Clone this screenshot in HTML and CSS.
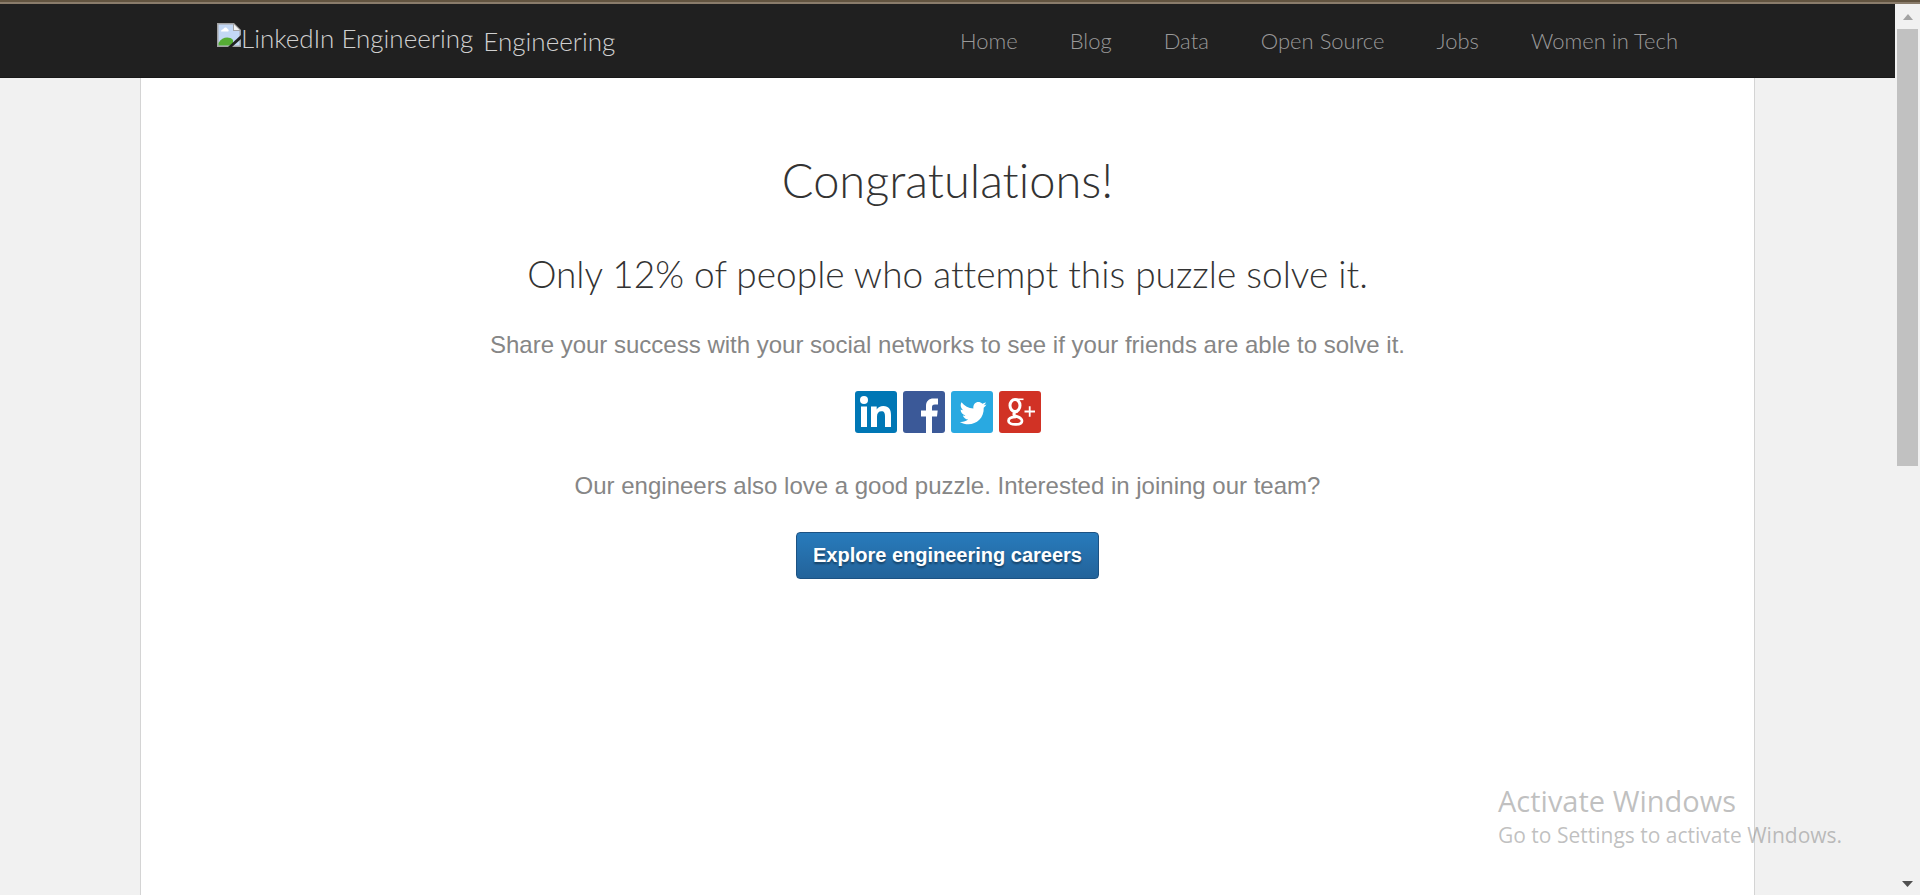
FILE: index.html
```
<!DOCTYPE html>
<html lang="en">
<head>
<meta charset="utf-8">
<title>LinkedIn Engineering</title>
<link rel="stylesheet" href="styles.css">
</head>
<body>
<div class="window-edge"></div>
<div class="viewport">
  <div class="page">
    <header class="header">
      <a class="brand" href="#">
        <span class="logo">
          <svg class="logo-icon" viewBox="0 0 24 24" aria-hidden="true">
            <path d="M0 0H17L24 7V24H0Z" fill="#a3a3a3"/>
            <path d="M1.500 1.500H16V8H22.500V22.500H1.500Z" fill="#c3d8f5"/>
            <path d="M4 8.500C4 6.500 6 6.500 6.500 6C7 4 10 4 10.500 6C12 6.500 12 8.500 11 8.500Z" fill="#fff"/>
            <path d="M1.500 22.500V20C5 14 12 13 16 17V22.500Z" fill="#56ad35"/>
            <path d="M17 1.500V7H22.500Z" fill="#f4f4f4"/>
            <path d="M11 24L24 12V16L15 24Z" fill="#202020"/>
          </svg>
          <span>LinkedIn Engineering</span>
        </span>
        <span class="brand-name">Engineering</span>
      </a>
      <nav class="nav">
        <a href="#">Home</a>
        <a href="#">Blog</a>
        <a href="#">Data</a>
        <a href="#">Open Source</a>
        <a href="#">Jobs</a>
        <a href="#">Women in Tech</a>
      </nav>
    </header>
    <main class="content">
      <h1>Congratulations!</h1>
      <h2>Only 12% of people who attempt this puzzle solve it.</h2>
      <p>Share your success with your social networks to see if your friends are able to solve it.</p>
      <div class="share">
        <a href="#" aria-label="Share on LinkedIn"><svg viewBox="0 0 42 42">
          <rect width="42" height="42" rx="3" fill="#0077b5"/>
          <circle cx="9" cy="9" r="4" fill="#fff"/>
          <path d="M6 15.500H12V36H6ZM16 15.500H21.700V18.500C23 16.200 25.300 15 28.300 15C34 15 36 18.500 36 24V36H30V25.500C30 22.300 29.300 20.300 26.500 20.300C23.500 20.300 22 22.300 22 25.500V36H16Z" fill="#fff"/>
        </svg></a>
        <a href="#" aria-label="Share on Facebook"><svg viewBox="0 0 42 42">
          <rect width="42" height="42" rx="3" fill="#3b5998"/>
          <path d="M23 42V25.500H18V19.500H23V15C23 10 26 7.500 30.500 7.500H35V13.500H32C29.500 13.500 29 14.500 29 16.500V19.500H34.700L34 25.500H29V42Z" fill="#fff"/>
        </svg></a>
        <a href="#" aria-label="Share on Twitter"><svg viewBox="0 0 42 42">
          <rect width="42" height="42" rx="3" fill="#29a9e1"/>
          <path d="M35.500 13.500C34.500 14 33.600 14.200 32.700 14.300C33.800 13.600 34.500 12.600 34.900 11.300C33.800 12 32.600 12.400 31.400 12.700C27.500 8.700 21.500 11.800 22.400 17.500C17.500 17.300 13.500 15 10.500 11.300C9 14 9.700 17.500 12.300 19.200C11.400 19.200 10.500 19 9.600 18.500C9.600 21.300 11.500 23.700 14.400 24.400C13.600 24.700 12.700 24.700 11.800 24.500C12.600 26.900 14.600 28.400 17.200 28.500C14.800 30.400 11.900 31.200 8.800 30.900C19.500 37.300 33.400 30.300 32.700 16.800C33.800 16 34.800 14.900 35.500 13.500Z" fill="#fff"/>
        </svg></a>
        <a href="#" aria-label="Share on Google Plus"><svg viewBox="0 0 42 42">
          <rect width="42" height="42" rx="3" fill="#d13225"/>
          <g fill="none" stroke="#fff">
            <ellipse cx="16" cy="14.500" rx="5" ry="6" stroke-width="3"/>
            <path d="M16.500 8.300H24.500" stroke-width="1.600"/>
            <path d="M18.500 20.300C15 21.500 14 23 15.500 24.300C17.500 26 23 26 23 30C23 34.500 9.500 34.700 9.500 30C9.500 27 13 25.800 17 25.800" stroke-width="2.700"/>
            <path d="M25.500 20.500H36M30.700 15.300V25.700" stroke-width="1.800"/>
          </g>
        </svg></a>
      </div>
      <p>Our engineers also love a good puzzle. Interested in joining our team?</p>
      <a class="button" href="#">Explore engineering careers</a>
    </main>
  </div>
  <div class="scrollbar" aria-hidden="true">
    <svg class="arrow" viewBox="0 0 21 25"><path d="M6 16L11 10L16 16Z" fill="#a3a3a3"/></svg>
    <div class="track"><div class="thumb"></div></div>
    <svg class="arrow" viewBox="0 0 21 25"><path d="M5 11H16L10.500 17Z" fill="#505050"/></svg>
  </div>
</div>
<aside class="watermark">
  <div class="watermark-title">Activate Windows</div>
  <div class="watermark-text">Go to Settings to activate Windows.</div>
</aside>
</body>
</html>
```
FILE: styles.css
```
* {
  box-sizing: border-box;
}

body {
  margin: 0;
  height: 100vh;
  display: flex;
  flex-direction: column;
  overflow: hidden;
  background: #f1f1f1;
  color: #868686;
  font-family: "Liberation Sans", Arial, sans-serif;
}

a {
  color: inherit;
  text-decoration: none;
}

.window-edge {
  flex: none;
  height: 4px;
  background: #625440;
  border-bottom: 2px solid #8a7c6b;
}

.viewport {
  flex: 1;
  display: flex;
  min-height: 0;
}

.page {
  flex: 1;
  display: flex;
  flex-direction: column;
}

.header {
  display: flex;
  justify-content: space-between;
  align-items: center;
  height: 74px;
  padding: 0 217px;
  background: #202020;
  border-bottom: 1px solid #181818;
  font-family: Lato, sans-serif;
  font-weight: 300;
}

.brand {
  display: flex;
  gap: 10px;
  color: #d0d0d0;
  font-size: 26px;
  line-height: 30px;
}

.logo {
  display: flex;
  align-items: flex-start;
  padding-bottom: 5px;
}

.logo-icon {
  width: 24px;
  height: 24px;
}

.brand-name {
  padding-top: 3px;
}

.nav {
  display: flex;
  gap: 52px;
  color: #999;
  font-size: 22px;
}

.content {
  flex: 1;
  display: flex;
  flex-direction: column;
  align-items: center;
  margin: 0 140px;
  padding-top: 70px;
  background: #fff;
  border: solid #d4d4d4;
  border-width: 0 1px;
  text-align: center;
}

h1,
h2 {
  margin: 0;
  color: #333;
  font-family: Lato, sans-serif;
  font-weight: 300;
  font-variant-ligatures: none;
}

h1 {
  font-size: 47px;
  line-height: 64px;
}

h2 {
  margin-top: 36px;
  font-size: 37px;
  line-height: 52px;
}

p {
  margin: 0;
  font-size: 24px;
  line-height: 32px;
}

h2 + p {
  margin-top: 29px;
}

.share {
  display: flex;
  gap: 6px;
  margin: 30px 0 37px;
}

.share svg {
  display: block;
  width: 42px;
  height: 42px;
}

.button {
  margin-top: 30px;
  padding: 0 16px 1px;
  border: 1px solid #1c5283;
  border-radius: 4px;
  background: linear-gradient(#287bbc, #23639a);
  color: #fff;
  font-size: 20px;
  font-weight: bold;
  line-height: 44px;
  text-shadow: 0 2px 2px rgba(0, 0, 0, 0.4);
}

.scrollbar {
  display: flex;
  flex-direction: column;
  width: 25px;
  padding: 0 2px;
  background: #f1f1f1;
}

.arrow {
  flex: none;
  width: 21px;
  height: 25px;
}

.track {
  flex: 1;
}

.thumb {
  height: 52%;
  background: #c1c1c1;
}

.watermark {
  position: absolute;
  right: 80px;
  bottom: 44px;
  width: 342px;
  color: rgba(130, 130, 130, 0.5);
  font-family: "Open Sans", sans-serif;
  white-space: nowrap;
}

.watermark-title {
  font-size: 29px;
  line-height: 36px;
}

.watermark-text {
  font-size: 21px;
  line-height: 32px;
}
```
